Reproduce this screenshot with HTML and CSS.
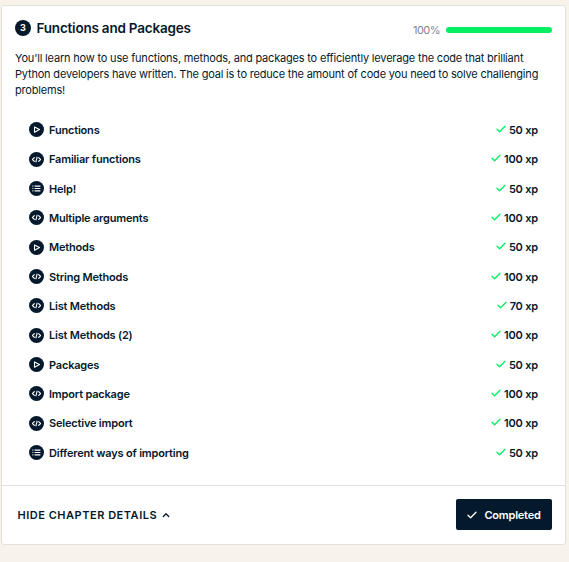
FILE: index.html
```html
<!DOCTYPE html>
<html lang="en">
<head>
<meta charset="utf-8">
<title>Functions and Packages</title>
<link rel="stylesheet" href="styles.css">
</head>
<body>
<svg width="0" height="0" class="defs">
  <symbol id="video" viewBox="0 0 15 15"><circle cx="7.5" cy="7.5" r="7.5" fill="#05192d"/><path d="M5.5 4.9v5.4l5-2.7z" fill="none" stroke="#fff" stroke-width="1.1" stroke-linejoin="round"/></symbol>
  <symbol id="code" viewBox="0 0 15 15"><circle cx="7.5" cy="7.5" r="7.5" fill="#05192d"/><path d="M5.3 5.7 3.5 7.5l1.8 1.8M9.7 5.7l1.8 1.8-1.8 1.8M8.1 5.2 6.9 9.8" fill="none" stroke="#fff" stroke-width="1.15" stroke-linecap="round" stroke-linejoin="round"/></symbol>
  <symbol id="list" viewBox="0 0 15 15"><circle cx="7.5" cy="7.5" r="7.5" fill="#05192d"/><path d="M5.6 5.1h5.8M5.6 7.5h5.8M5.6 9.9h5.8M3.4 5.1h1M3.4 7.5h1M3.4 9.9h1" fill="none" stroke="#fff" stroke-width="1.1"/></symbol>
  <symbol id="check" viewBox="0 0 10 8"><path d="M1 4.2 3.6 6.8 9 1.2" fill="none" stroke="currentColor" stroke-width="1.3" stroke-linecap="round" stroke-linejoin="round"/></symbol>
</svg>
<main class="card">
  <section class="body">
    <header class="head">
      <span class="number">3</span>
      <h1>Functions and Packages</h1>
      <span class="percent">100%</span>
      <span class="bar"></span>
    </header>
    <p class="description">
      You'll learn how to use functions, methods, and packages to efficiently leverage the code that brilliant<br>
      Python developers have written. The goal is to reduce the amount of code you need to solve challenging<br>
      problems!
    </p>
    <ul class="lessons">
      <li><svg class="icon"><use href="#video"/></svg><span class="name">Functions</span><svg class="check"><use href="#check"/></svg><span class="xp">50 xp</span></li>
      <li><svg class="icon"><use href="#code"/></svg><span class="name">Familiar functions</span><svg class="check"><use href="#check"/></svg><span class="xp">100 xp</span></li>
      <li><svg class="icon"><use href="#list"/></svg><span class="name">Help!</span><svg class="check"><use href="#check"/></svg><span class="xp">50 xp</span></li>
      <li><svg class="icon"><use href="#code"/></svg><span class="name">Multiple arguments</span><svg class="check"><use href="#check"/></svg><span class="xp">100 xp</span></li>
      <li><svg class="icon"><use href="#video"/></svg><span class="name">Methods</span><svg class="check"><use href="#check"/></svg><span class="xp">50 xp</span></li>
      <li><svg class="icon"><use href="#code"/></svg><span class="name">String Methods</span><svg class="check"><use href="#check"/></svg><span class="xp">100 xp</span></li>
      <li><svg class="icon"><use href="#code"/></svg><span class="name">List Methods</span><svg class="check"><use href="#check"/></svg><span class="xp">70 xp</span></li>
      <li><svg class="icon"><use href="#code"/></svg><span class="name">List Methods (2)</span><svg class="check"><use href="#check"/></svg><span class="xp">100 xp</span></li>
      <li><svg class="icon"><use href="#video"/></svg><span class="name">Packages</span><svg class="check"><use href="#check"/></svg><span class="xp">50 xp</span></li>
      <li><svg class="icon"><use href="#code"/></svg><span class="name">Import package</span><svg class="check"><use href="#check"/></svg><span class="xp">100 xp</span></li>
      <li><svg class="icon"><use href="#code"/></svg><span class="name">Selective import</span><svg class="check"><use href="#check"/></svg><span class="xp">100 xp</span></li>
      <li><svg class="icon"><use href="#list"/></svg><span class="name">Different ways of importing</span><svg class="check"><use href="#check"/></svg><span class="xp">50 xp</span></li>
    </ul>
  </section>
  <footer class="foot">
    <a class="toggle">HIDE CHAPTER DETAILS<svg class="caret" viewBox="0 0 8 6"><path d="M1.3 4.5 4 1.8l2.7 2.7" fill="none" stroke="currentColor" stroke-width="1.3" stroke-linecap="round" stroke-linejoin="round"/></svg></a>
    <button class="completed"><svg class="check"><use href="#check"/></svg><span>Completed</span></button>
  </footer>
</main>
</body>
</html>
```
FILE: styles.css
```css
* { box-sizing: border-box; }
body {
  margin: 0;
  padding: 5px 3px 0 1px;
  background: #f7f3eb;
  color: #05192d;
  font-family: Inter, "Liberation Sans", sans-serif;
  font-size: 11px;
}
.defs { position: absolute; }
.card {
  height: 540px;
  background: #fff;
  border: 1px solid #e5e1da;
  border-radius: 3px;
}
.body {
  height: 480px;
  padding: 12px 13px 0;
  border-bottom: 1px solid #e5e1da;
}
.head { display: flex; align-items: center; height: 20px; }
.number {
  width: 16px;
  height: 16px;
  border-radius: 50%;
  background: #05192d;
  color: #fff;
  font-size: 9px;
  font-weight: 700;
  line-height: 16px;
  text-align: center;
}
h1 {
  margin: 0 auto 0 5.5px;
  font-size: 13.5px;
  font-weight: 600;
  line-height: 20px;
  letter-spacing: -0.21px;
  white-space: nowrap;
}
.percent { margin: 4px 6px 0 0; color: #808892; letter-spacing: -0.55px; }
.bar { width: 106px; height: 6px; margin-top: 4px; border-radius: 3px; background: #03ef62; }
.description { margin: 12px 0 0; line-height: 16px; letter-spacing: -0.19px; white-space: nowrap; }
.lessons { margin: 17.3px 0 0; padding: 0 14px; list-style: none; font-weight: 600; letter-spacing: -0.19px; }
.lessons li { display: flex; align-items: center; height: 29.33px; }
.icon { width: 15px; height: 15px; margin-right: 5px; }
.name { margin-right: auto; }
.check { width: 10px; height: 8px; }
.lessons .check { margin: -2px 3px 0 0; color: #03ef62; }
.foot { display: flex; align-items: center; justify-content: space-between; height: 58px; padding: 0 13px 0 15.5px; }
.toggle { display: flex; align-items: center; font-weight: 600; letter-spacing: 0.52px; }
.caret { width: 8px; height: 6px; margin-left: 5px; }
.completed {
  display: flex;
  align-items: center;
  justify-content: center;
  gap: 7px;
  width: 96px;
  height: 31px;
  margin-bottom: 1px;
  padding: 1px 0 0;
  border: 0;
  border-radius: 2px;
  background: #05192d;
  color: #fff;
  font: 600 11px Inter, "Liberation Sans", sans-serif;
  letter-spacing: -0.22px;
}
```
